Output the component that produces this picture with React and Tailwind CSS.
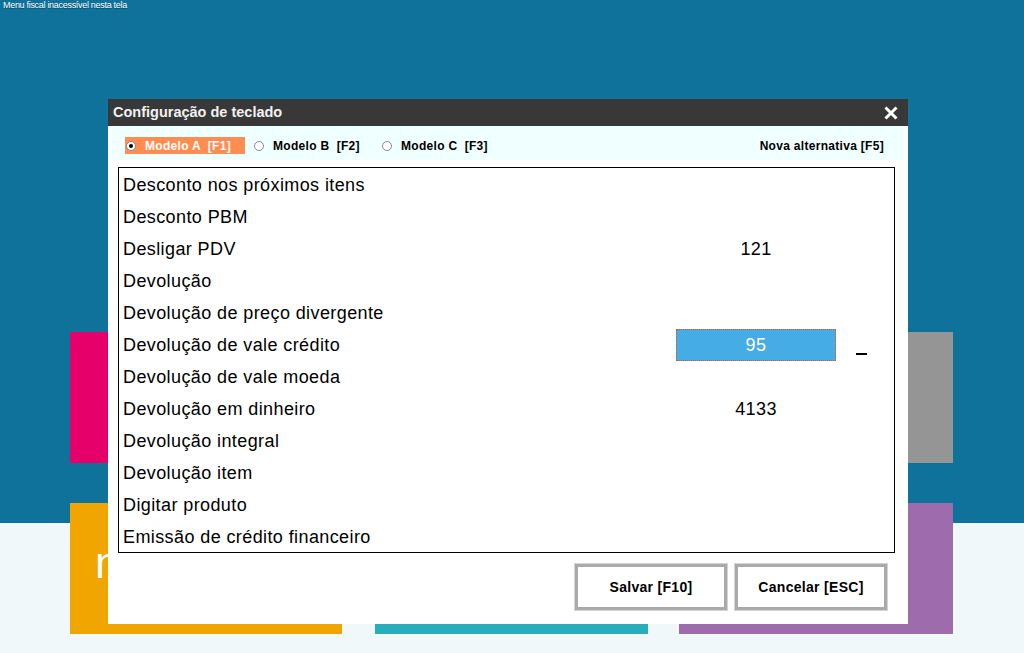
import { useState } from "react";

const acoes = [
  { nome: "Desconto nos próximos itens", tecla: "" },
  { nome: "Desconto PBM", tecla: "" },
  { nome: "Desligar PDV", tecla: "121" },
  { nome: "Devolução", tecla: "" },
  { nome: "Devolução de preço divergente", tecla: "" },
  { nome: "Devolução de vale crédito", tecla: "95", ativo: true },
  { nome: "Devolução de vale moeda", tecla: "" },
  { nome: "Devolução em dinheiro", tecla: "4133" },
  { nome: "Devolução integral", tecla: "" },
  { nome: "Devolução item", tecla: "" },
  { nome: "Digitar produto", tecla: "" },
  { nome: "Emissão de crédito financeiro", tecla: "" },
];

const modelos = [
  { id: "A", label: "Modelo A  [F1]", w: "w-[120px]" },
  { id: "B", label: "Modelo B  [F2]", w: "ml-[8px] w-[128px]" },
  { id: "C", label: "Modelo C  [F3]", w: "w-[128px]" },
];

const Radio = ({ checked }) => (
  <span className="flex h-[10px] w-[10px] shrink-0 items-center justify-center rounded-full border border-[#8a8a8a] bg-white">
    {checked && <span className="h-[4px] w-[4px] rounded-full bg-black" />}
  </span>
);

const Tile = ({ className, children }) => (
  <div className={`h-[131px] ${className}`}>{children}</div>
);

const App = () => {
  const [modelo, setModelo] = useState("A");

  return (
    <div
      className="relative h-[653px] w-[1024px] overflow-hidden bg-[linear-gradient(to_bottom,#0e729b_523px,#f0f8fa_523px)]"
      style={{ fontFamily: '"Liberation Sans", Arial, sans-serif' }}
    >
      <div className="h-0 pl-[3px] text-[9px] leading-[10px] tracking-[-0.3px] text-white [text-shadow:0_1px_0_#0a4d69]">
        Menu fiscal inacessível nesta tela
      </div>

      {/* tiles do menu principal */}
      <div className="flex flex-col gap-[40px] pl-[70px] pt-[332px]">
        <div className="flex">
          <Tile className="w-[272px] bg-[#e5006a]" />
          <Tile className="ml-[33px] w-[273px] bg-[#27adbb]" />
          <Tile className="ml-[31px] w-[274px] bg-[#959595]" />
        </div>
        <div className="flex">
          <Tile className="w-[272px] bg-[#f0a500] pl-[25px] pt-[38px] text-[44px] leading-none font-light text-white">
            n
          </Tile>
          <Tile className="ml-[33px] w-[273px] bg-[#27adbb]" />
          <Tile className="ml-[31px] w-[274px] bg-[#9e6bad]" />
        </div>
      </div>

      {/* modal */}
      <div className="absolute left-[108px] top-[99px] flex h-[525px] w-[800px] flex-col bg-white">
        <div className="flex h-[27px] items-center justify-between bg-[#383838] pl-[5px] pr-[10px]">
          <span className="text-[14.5px] font-bold text-[#f2f2f2]">
            Configuração de teclado
          </span>
          <svg width="14" height="14" viewBox="0 0 14 14">
            <path d="M1.5 1.5 L12.5 12.5 M12.5 1.5 L1.5 12.5" stroke="white" strokeWidth="3" />
          </svg>
        </div>

        <div className="mx-[4px] flex h-[34px] items-start bg-[#f0ffff] pl-[13px] pr-[20px] pt-[11px] text-[12px] font-bold tracking-[0.3px]">
          {modelos.map((m) => (
            <button
              key={m.id}
              onClick={() => setModelo(m.id)}
              className={`flex h-[17px] items-center gap-[9px] pl-[1px] ${m.w} ${
                modelo === m.id ? "bg-[#ff8c50] text-white" : "text-black"
              }`}
            >
              <Radio checked={modelo === m.id} />
              <span className="whitespace-pre">{m.label}</span>
            </button>
          ))}
          <span className="ml-auto flex h-[17px] items-center text-black">Nova alternativa [F5]</span>
        </div>

        <div className="ml-[10px] mr-[13px] mt-[7px] h-[386px] border border-black pt-[1px] text-[18px] tracking-[0.4px] text-black">
          {acoes.map((a) => (
            <div key={a.nome} className="flex h-[32px] items-center">
              <span className="w-[557px] pl-[4px]">{a.nome}</span>
              <span
                className={`flex h-[32px] w-[160px] items-center justify-center ${
                  a.ativo ? "border border-dotted border-[#d9541c] bg-[#45ace6] text-white" : ""
                }`}
              >
                {a.tecla}
              </span>
              {a.ativo && <span className="ml-[20px] mt-[18px] h-[2px] w-[11px] bg-black" />}
            </div>
          ))}
        </div>

        <div className="mr-[21px] mt-[11px] flex justify-end gap-[8px] text-[14px] font-bold tracking-[0.3px]">
          <button className="h-[46px] w-[152px] border-[3px] border-[#aaaaaa] bg-white text-black shadow-[0_0_0_1px_#d4d4d4]">
            Salvar [F10]
          </button>
          <button className="h-[46px] w-[152px] border-[3px] border-[#aaaaaa] bg-white text-black shadow-[0_0_0_1px_#d4d4d4]">
            Cancelar [ESC]
          </button>
        </div>
      </div>
    </div>
  );
};

export default App;
